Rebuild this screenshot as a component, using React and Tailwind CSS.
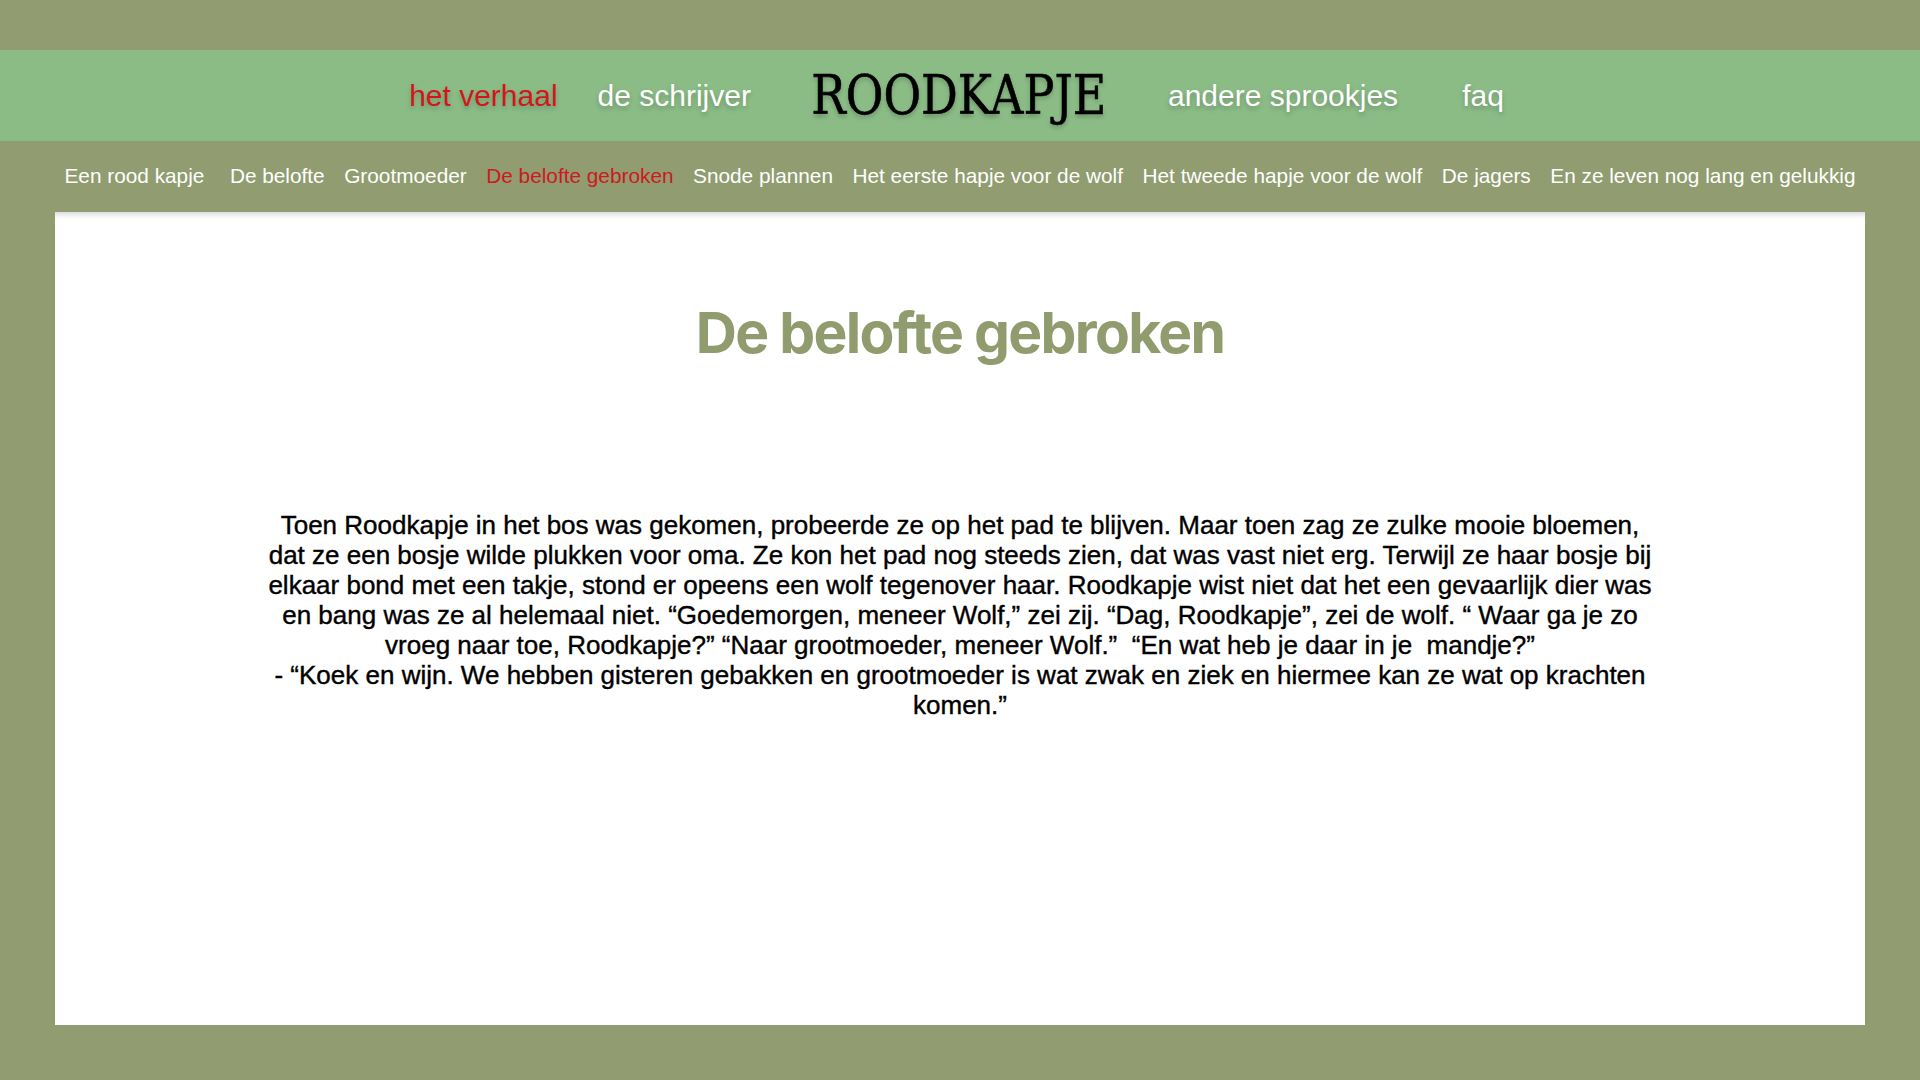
const STORY_LINKS = [
  { label: 'Een rood kapje' },
  { label: 'De belofte' },
  { label: 'Grootmoeder' },
  { label: 'De belofte gebroken', active: true },
  { label: 'Snode plannen' },
  { label: 'Het eerste hapje voor de wolf' },
  { label: 'Het tweede hapje voor de wolf' },
  { label: 'De jagers' },
  { label: 'En ze leven nog lang en gelukkig' },
];

const STORY_LINES = [
  'Toen Roodkapje in het bos was gekomen, probeerde ze op het pad te blijven. Maar toen zag ze zulke mooie bloemen,',
  'dat ze een bosje wilde plukken voor oma. Ze kon het pad nog steeds zien, dat was vast niet erg. Terwijl ze haar bosje bij',
  'elkaar bond met een takje, stond er opeens een wolf tegenover haar. Roodkapje wist niet dat het een gevaarlijk dier was',
  'en bang was ze al helemaal niet. “Goedemorgen, meneer Wolf,” zei zij. “Dag, Roodkapje”, zei de wolf. “ Waar ga je zo',
  'vroeg naar toe, Roodkapje?” “Naar grootmoeder, meneer Wolf.”  “En wat heb je daar in je  mandje?”',
  '- “Koek en wijn. We hebben gisteren gebakken en grootmoeder is wat zwak en ziek en hiermee kan ze wat op krachten',
  'komen.”',
];

const shadowCls = '[text-shadow:0_3px_5px_rgba(0,0,0,0.22)]';

export default function App() {
  return (
    <div className="min-h-screen bg-[#919c70] font-['Liberation_Sans',Arial,sans-serif]">
      <div className="h-[50px]" />

      {/* main header */}
      <header className="h-[91px] bg-[#8bbc86] flex items-center justify-center pr-[7px] text-[30px] leading-none">
        <a className={`text-[#d4161c] ${shadowCls}`}>het verhaal</a>
        <a className={`ml-[40px] text-white ${shadowCls}`}>de schrijver</a>
        <div className="ml-[62px] w-[292px] flex justify-center">
          <span className={`inline-block scale-x-[0.835] font-['DejaVu_Serif',serif] text-[55px] text-black whitespace-nowrap [-webkit-text-stroke:0.6px_black] ${shadowCls}`}>
            ROODKAPJE
          </span>
        </div>
        <a className={`ml-[63px] text-white ${shadowCls}`}>andere sprookjes</a>
        <a className={`ml-[64px] text-white ${shadowCls}`}>faq</a>
      </header>

      {/* chapters */}
      <nav className="h-[71px] flex items-center justify-center gap-[19.5px] text-[20.8px] leading-none">
        {STORY_LINKS.map((l, i) => (
          <a key={l.label} className={`whitespace-nowrap ${i === 0 ? 'mr-[6px]' : ''} ${l.active ? 'text-[#cc1a1f]' : 'text-white'}`}>
            {l.label}
          </a>
        ))}
      </nav>

      <main className="mx-[55px] h-[813px] bg-white shadow-[inset_0_7px_6px_-5px_rgba(0,0,0,0.18)]">
        <h1 className="pt-[92px] text-center font-['Inter',sans-serif] font-bold text-[57px] leading-none tracking-[-0.03em] text-[#919c6e]">
          De belofte gebroken
        </h1>
        <p className="mt-[149px] text-center text-[26px] leading-[30px] text-black whitespace-pre-wrap [-webkit-text-stroke:0.4px_black]">
          {STORY_LINES.map((line, i) => (
            <span key={i}>{line}{i < STORY_LINES.length - 1 && <br />}</span>
          ))}
        </p>
      </main>
    </div>
  );
}
